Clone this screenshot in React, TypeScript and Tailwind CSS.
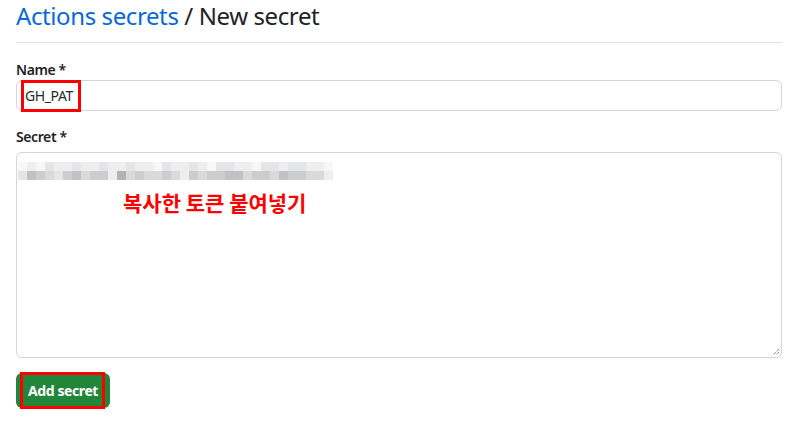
import React from 'react';

const shades: Record<string, string> = {
    a: 'bg-[#f7f7f7]',
    b: 'bg-[#eeeeee]',
    c: 'bg-[#e4e5e7]',
    d: 'bg-[#d9dadc]',
    e: 'bg-[#cdcdcf]',
    f: 'bg-[#c1c2c5]',
    g: 'bg-[#b2b3b6]',
};

// pixelated (blurred) token rows
const rowTop = 'abacbbcbbcbbcbbacbbcbaccbbaccbccbba';
const rowBottom = 'cfedcefdeebgdeddedbedeeffdeedfeeddb';

function PixelRow({ pattern }: { pattern: string }) {
    return (
        <div className="flex">
            {pattern.split('').map((k, i) => (
                <div key={i} className={`w-[9px] h-[9px] ${shades[k]}`} />
            ))}
        </div>
    );
}

export default function App() {
    return (
        <div className="w-[798px] h-[428px] bg-white px-4 font-['Noto_Sans',sans-serif] tracking-[-0.025em] text-[#1f2328] overflow-hidden">
            <div className="pb-[10px] border-b border-[#dfe2e5]">
                <h1 className="text-[24px] leading-[32px] font-normal">
                    <a className="text-[#0969da]">Actions secrets</a> / New secret
                </h1>
            </div>

            <div className="mt-[17px]">
                <label className="block text-[14px] leading-[20px] font-semibold">Name *</label>
                <div className="relative h-[31px] border border-[#d0d7de] rounded-md flex items-center px-2 text-[14px] text-[#24292f]">
                    GH_PAT
                    <div className="absolute left-[4px] top-[-1px] w-[60px] h-[32px] border-[3px] border-[#ff0000]" />
                </div>
            </div>

            <div className="mt-4">
                <label className="block text-[14px] leading-[20px] font-semibold">Secret *</label>
                <div className="relative mt-[5px] h-[206px] border border-[#d0d7de] rounded-md pl-[1px] pt-[9px]">
                    <PixelRow pattern={rowTop} />
                    <PixelRow pattern={rowBottom} />
                    <p className="ml-[105px] mt-[8px] text-[21px] leading-[28px] tracking-normal font-bold text-[#ff0000] font-['Noto_Sans_CJK_KR',sans-serif]">
                        복사한 토큰 붙여넣기
                    </p>
                    <svg className="absolute right-[1px] bottom-[1px]" width="9" height="9" viewBox="0 0 9 9">
                        <path d="M8 2 L2 8 M8 5 L5 8" stroke="#555" strokeWidth="1" strokeDasharray="1 1" />
                    </svg>
                </div>
            </div>

            <div className="relative mt-[15px] w-[94px]">
                <button className="w-[94px] h-[35px] rounded-md bg-[#22863a] text-white text-[14px] font-bold">
                    Add secret
                </button>
                <div className="absolute left-[4px] top-[-1px] w-[85px] h-[37px] border-[3px] border-[#ff0000]" />
            </div>
        </div>
    );
}
